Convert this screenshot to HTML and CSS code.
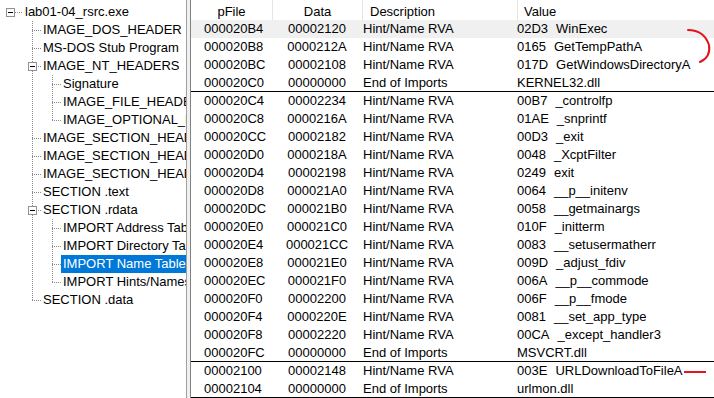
FILE: index.html
```html
<!DOCTYPE html>
<html>
<head>
<meta charset="utf-8">
<link rel="stylesheet" href="styles.css">
</head>
<body>
<div class="app">
  <div class="tree">
    <div class="tn"><span class="tw0"><i class="box"></i><i class="hd"></i></span><span class="lbl">lab01-04_rsrc.exe</span></div>
    <div class="tn"><span class="ind"></span><span class="c1"></span><span class="lbl">IMAGE_DOS_HEADER</span></div>
    <div class="tn"><span class="ind"></span><span class="c1"></span><span class="lbl">MS-DOS Stub Program</span></div>
    <div class="tn"><span class="ind"></span><span class="c1"><i class="box"></i></span><span class="lbl">IMAGE_NT_HEADERS</span></div>
    <div class="tn"><span class="ind"></span><span class="c1 thru"></span><span class="c2"></span><span class="lbl">Signature</span></div>
    <div class="tn"><span class="ind"></span><span class="c1 thru"></span><span class="c2"></span><span class="lbl">IMAGE_FILE_HEADER</span></div>
    <div class="tn"><span class="ind"></span><span class="c1 thru"></span><span class="c2 last"></span><span class="lbl">IMAGE_OPTIONAL_HEADER</span></div>
    <div class="tn"><span class="ind"></span><span class="c1"></span><span class="lbl">IMAGE_SECTION_HEADER .text</span></div>
    <div class="tn"><span class="ind"></span><span class="c1"></span><span class="lbl">IMAGE_SECTION_HEADER .rdata</span></div>
    <div class="tn"><span class="ind"></span><span class="c1"></span><span class="lbl">IMAGE_SECTION_HEADER .data</span></div>
    <div class="tn"><span class="ind"></span><span class="c1"></span><span class="lbl">SECTION .text</span></div>
    <div class="tn"><span class="ind"></span><span class="c1"><i class="box"></i></span><span class="lbl">SECTION .rdata</span></div>
    <div class="tn"><span class="ind"></span><span class="c1 thru"></span><span class="c2"></span><span class="lbl">IMPORT Address Table</span></div>
    <div class="tn"><span class="ind"></span><span class="c1 thru"></span><span class="c2"></span><span class="lbl">IMPORT Directory Table</span></div>
    <div class="tn"><span class="ind"></span><span class="c1 thru"></span><span class="c2"></span><span class="lbl sel">IMPORT Name Table</span></div>
    <div class="tn"><span class="ind"></span><span class="c1 thru"></span><span class="c2 last"></span><span class="lbl">IMPORT Hints/Names &amp; DLL Names</span></div>
    <div class="tn"><span class="ind"></span><span class="c1 last"></span><span class="lbl">SECTION .data</span></div>
  </div>
  <div class="splitter"></div>
  <div class="list">
    <div class="hdr">
      <div class="h h-pfile">pFile</div>
      <div class="h h-data">Data</div>
      <div class="h h-desc">Description</div>
      <div class="h h-val">Value</div>
    </div>
    <div class="row hover"><span class="pf">000020B4</span><span class="dt">00002120</span><span class="ds">Hint/Name RVA</span><span class="vl"><span class="hint">02D3</span>WinExec</span></div>
    <div class="row"><span class="pf">000020B8</span><span class="dt">0000212A</span><span class="ds">Hint/Name RVA</span><span class="vl"><span class="hint">0165</span>GetTempPathA</span></div>
    <div class="row"><span class="pf">000020BC</span><span class="dt">00002108</span><span class="ds">Hint/Name RVA</span><span class="vl"><span class="hint">017D</span>GetWindowsDirectoryA</span></div>
    <div class="row sep"><span class="pf">000020C0</span><span class="dt">00000000</span><span class="ds">End of Imports</span><span class="vl">KERNEL32.dll</span></div>
    <div class="row"><span class="pf">000020C4</span><span class="dt">00002234</span><span class="ds">Hint/Name RVA</span><span class="vl"><span class="hint">00B7</span>_controlfp</span></div>
    <div class="row"><span class="pf">000020C8</span><span class="dt">0000216A</span><span class="ds">Hint/Name RVA</span><span class="vl"><span class="hint">01AE</span>_snprintf</span></div>
    <div class="row"><span class="pf">000020CC</span><span class="dt">00002182</span><span class="ds">Hint/Name RVA</span><span class="vl"><span class="hint">00D3</span>_exit</span></div>
    <div class="row"><span class="pf">000020D0</span><span class="dt">0000218A</span><span class="ds">Hint/Name RVA</span><span class="vl"><span class="hint">0048</span>_XcptFilter</span></div>
    <div class="row"><span class="pf">000020D4</span><span class="dt">00002198</span><span class="ds">Hint/Name RVA</span><span class="vl"><span class="hint">0249</span>exit</span></div>
    <div class="row"><span class="pf">000020D8</span><span class="dt">000021A0</span><span class="ds">Hint/Name RVA</span><span class="vl"><span class="hint">0064</span>__p__initenv</span></div>
    <div class="row"><span class="pf">000020DC</span><span class="dt">000021B0</span><span class="ds">Hint/Name RVA</span><span class="vl"><span class="hint">0058</span>__getmainargs</span></div>
    <div class="row"><span class="pf">000020E0</span><span class="dt">000021C0</span><span class="ds">Hint/Name RVA</span><span class="vl"><span class="hint">010F</span>_initterm</span></div>
    <div class="row"><span class="pf">000020E4</span><span class="dt">000021CC</span><span class="ds">Hint/Name RVA</span><span class="vl"><span class="hint">0083</span>__setusermatherr</span></div>
    <div class="row"><span class="pf">000020E8</span><span class="dt">000021E0</span><span class="ds">Hint/Name RVA</span><span class="vl"><span class="hint">009D</span>_adjust_fdiv</span></div>
    <div class="row"><span class="pf">000020EC</span><span class="dt">000021F0</span><span class="ds">Hint/Name RVA</span><span class="vl"><span class="hint">006A</span>__p__commode</span></div>
    <div class="row"><span class="pf">000020F0</span><span class="dt">00002200</span><span class="ds">Hint/Name RVA</span><span class="vl"><span class="hint">006F</span>__p__fmode</span></div>
    <div class="row"><span class="pf">000020F4</span><span class="dt">0000220E</span><span class="ds">Hint/Name RVA</span><span class="vl"><span class="hint">0081</span>__set_app_type</span></div>
    <div class="row"><span class="pf">000020F8</span><span class="dt">00002220</span><span class="ds">Hint/Name RVA</span><span class="vl"><span class="hint">00CA</span>_except_handler3</span></div>
    <div class="row sep"><span class="pf">000020FC</span><span class="dt">00000000</span><span class="ds">End of Imports</span><span class="vl">MSVCRT.dll</span></div>
    <div class="row"><span class="pf">00002100</span><span class="dt">00002148</span><span class="ds">Hint/Name RVA</span><span class="vl"><span class="hint">003E</span>URLDownloadToFileA</span></div>
    <div class="row sep"><span class="pf">00002104</span><span class="dt">00000000</span><span class="ds">End of Imports</span><span class="vl">urlmon.dll</span></div>
  </div>
  <svg class="marks" width="714" height="398" viewBox="0 0 714 398">
    <path d="M688 30 Q704 30 709 45 Q711 57 700 62" fill="none" stroke="#e3141e" stroke-width="2" stroke-linecap="round"/>
    <path d="M684 372 L706 372" fill="none" stroke="#e3141e" stroke-width="2"/>
  </svg>
</div>
</body>
</html>
```

FILE: styles.css
```css
html, body {
  margin: 0;
  padding: 0;
  background: #fff;
}

.app {
  position: relative;
  display: flex;
  width: 714px;
  height: 398px;
  overflow: hidden;
  background: #f0f0f0;
  font-family: "Liberation Sans", Arial, sans-serif;
  font-size: 13px;
  color: #000;
}

/* ---------- tree ---------- */
.tree {
  width: 186px;
  flex: none;
  background: #fff;
  border-right: 1px solid #a0a0a0;
  padding-top: 3px;
  overflow: hidden;
}

.tn {
  display: flex;
  align-items: flex-start;
  height: 18px;
  line-height: 18px;
  white-space: nowrap;
}

.tw0 {
  width: 23px;
  height: 18px;
  flex: none;
  display: flex;
  align-items: flex-start;
}

.box {
  flex: none;
  width: 9px;
  height: 9px;
  box-sizing: border-box;
  margin: 5px 0 0 6px;
  border: 1px solid #919191;
  background: #fff;
  display: flex;
  align-items: center;
  justify-content: center;
}

.box::after {
  content: "";
  width: 5px;
  height: 1px;
  background: #000;
}

.hd {
  flex: none;
  width: 7px;
  height: 1px;
  margin-top: 9px;
  background: repeating-linear-gradient(to right, #8a8a8a 0 1px, transparent 1px 2px);
}

.ind {
  width: 22px;
  height: 18px;
  flex: none;
}

.c1, .c2 {
  height: 18px;
  flex: none;
  display: flex;
  align-items: flex-start;
  background-image:
    repeating-linear-gradient(to bottom, #8a8a8a 0 1px, transparent 1px 2px),
    repeating-linear-gradient(to right, #8a8a8a 0 1px, transparent 1px 2px);
  background-repeat: no-repeat;
  background-size: 1px 18px, 9px 1px;
}

.c1 {
  width: 19px;
  background-position: 10px 0, 10px 9px;
}

.c2 {
  width: 20px;
  background-position: 11px 0, 11px 9px;
}

.c1.last, .c2.last {
  background-size: 1px 10px, 9px 1px;
}

.c1.thru {
  background-size: 1px 18px, 0 0;
}

.lbl {
  flex: 0 1 auto;
  min-width: 0;
  overflow: hidden;
  text-overflow: clip;
  padding: 0 2px;
  height: 18px;
}

.lbl.sel {
  background: #0078d7;
  color: #fff;
}

/* ---------- splitter ---------- */
.splitter {
  width: 3px;
  flex: none;
  background: #f0f0f0;
}

/* ---------- list ---------- */
.list {
  flex: 1;
  min-width: 0;
  background: #fff;
  border-left: 1px solid #828282;
  overflow: hidden;
}

.hdr, .row {
  display: grid;
  grid-template-columns: 81px 90px 155px 320px;
  white-space: nowrap;
}

.h {
  height: 20px;
  box-sizing: border-box;
  padding-top: 3px;
  line-height: 17px;
  overflow: hidden;
}

.h + .h {
  border-left: 1px solid #e5e5e5;
}

.h-pfile, .h-data {
  text-align: center;
}

.h-desc {
  padding-left: 7px;
}

.h-val {
  padding-left: 6px;
}

.row {
  height: 18px;
  line-height: 18px;
  box-sizing: border-box;
}

.row.hover {
  background: #f0f0f0;
}

.row.sep {
  border-bottom: 1px solid #000;
}

.pf {
  padding-left: 13px;
}

.dt {
  text-align: center;
}

.ds {
  padding-left: 1px;
}

.hint {
  margin-right: 8px;
}

/* ---------- annotations ---------- */
.marks {
  position: absolute;
  left: 0;
  top: 0;
  pointer-events: none;
}
```
